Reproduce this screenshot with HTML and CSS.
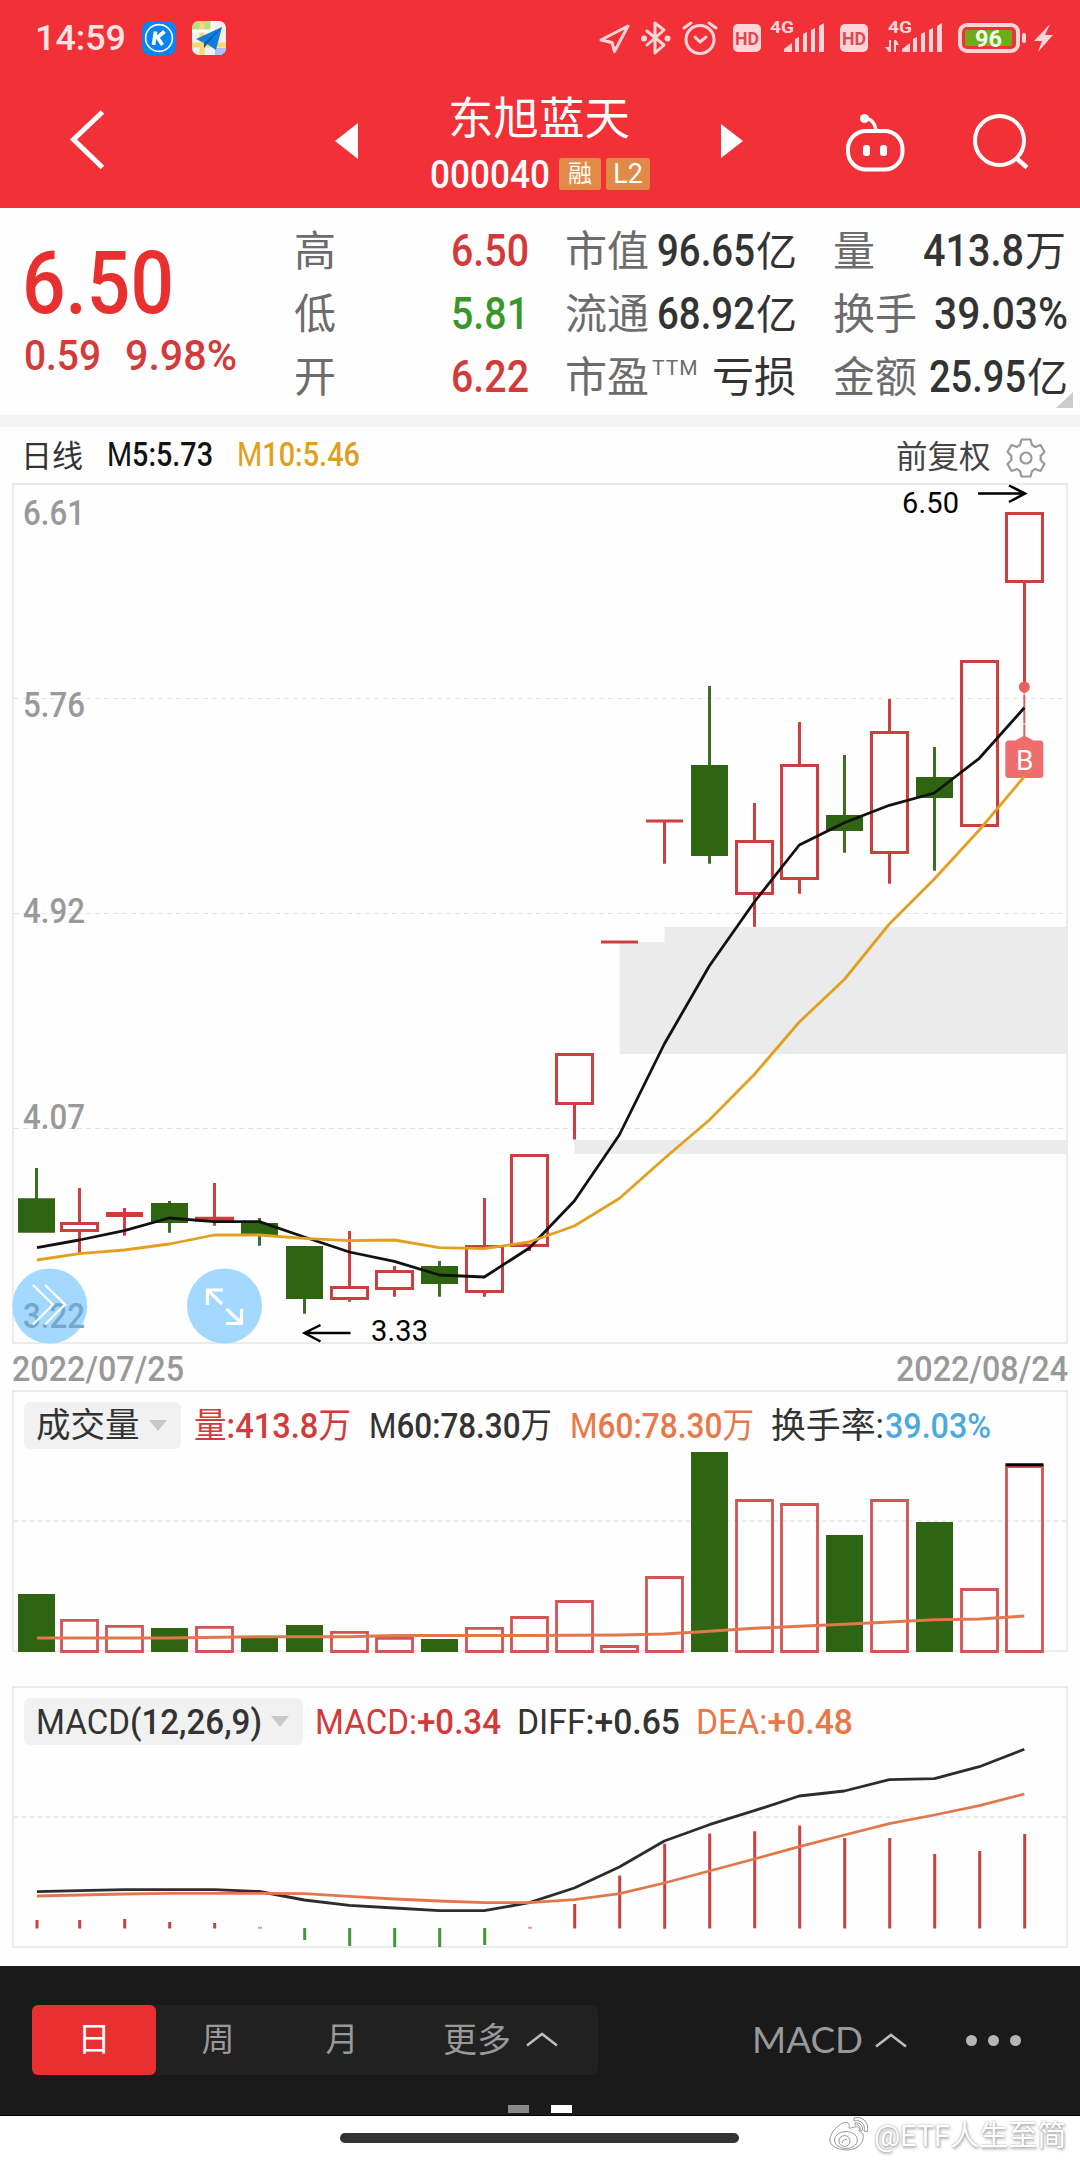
FILE: index.html
```html
<!DOCTYPE html>
<html lang="zh-CN">
<head>
<meta charset="utf-8">
<title>东旭蓝天 000040</title>
<link rel="stylesheet" href="styles.css">
</head>
<body>
<div class="screen">
  <header class="top">
    <div class="status">
      <svg class="status-time" width="87" height="40"><text x="-2" y="36" textLength="91" lengthAdjust="spacingAndGlyphs">14:59</text></svg>
      <svg class="app-k" width="34" height="34" viewBox="0 0 34 34"><rect width="34" height="34" rx="8" fill="#0a84f5"/><circle cx="17" cy="17" r="13.4" fill="none" stroke="#fff" stroke-width="1.6"/><path d="M13.5 10.5l-2 13.5M22.5 10.500l-8.500 7M15.500 16.500l5 7.500" fill="none" stroke="#fff" stroke-width="3.600"/></svg>
      <svg class="app-map" width="34" height="34" viewBox="0 0 34 34"><clipPath id="mapclip"><rect width="34" height="34" rx="7"/></clipPath><g clip-path="url(#mapclip)"><path d="M0 0h34v34H0z" fill="#f4f1ec"/><path d="M0 0h20v10H0z" fill="#b2e27f"/><path d="M23 27h11v7H23z" fill="#a9c4fb"/><path d="M0 24h34M10 0v34" stroke="#fbd775" stroke-width="5"/><path d="M20 0v10H0" fill="none" stroke="#fff" stroke-width="3"/></g><path d="M30 6L4 18l8 4v5l3-4 9 6z" fill="#0d80df"/><path d="M30 6L12 22v5l3-4z" fill="#085aa8"/></svg>
      <svg class="sys" width="460" height="40" viewBox="596 18 460 40">
        <g fill="none" stroke="#ffd5d7" stroke-width="3" stroke-linejoin="round" stroke-linecap="round">
          <path d="M628 26L601 40l11 2.500 2.500 9z"/>
          <path d="M647 31l17 14-9 8V23l9 7-17 15"/>
          <circle cx="700" cy="39.500" r="14"/>
          <path d="M695 37l5 5 6-5M684 28l7-5M716 28l-7-5"/>
          <rect x="960" y="25" width="58" height="26" rx="7" stroke-width="4"/>
        </g>
        <g fill="#ffd5d7">
          <circle cx="644" cy="38.500" r="3"/><circle cx="667.500" cy="38.500" r="3"/>
          <rect x="733" y="24" width="28" height="28" rx="5"/><rect x="840" y="24" width="28" height="28" rx="5"/>
          <path d="M784 52v-3l8-6v9zM795 39l4-2v15h-4zM803 34l4-2v20h-4zM811 30l4-2v24h-4zM819 26l5-3v29h-5z"/>
          <path d="M902 52v-3l8-6v9zM913 39l4-2v15h-4zM921 34l4-2v20h-4zM929 30l4-2v24h-4zM937 26l5-3v29h-5z"/>
          <path d="M889 40h2v12h-2l-4-5h4zM894 52V40h2l3 5h-3v7z"/>
          <rect x="1022" y="33" width="4" height="10" rx="2"/>
          <path d="M1050 24l-16 17h8l-4 11 15-17h-8z"/>
        </g>
        <rect x="965" y="30" width="47" height="16" rx="1" fill="#70a91a"/>
        <text class="hd" x="735" y="45" textLength="24" lengthAdjust="spacingAndGlyphs">HD</text>
        <text class="hd" x="842" y="45" textLength="24" lengthAdjust="spacingAndGlyphs">HD</text>
        <text class="net" x="770" y="33" textLength="24" lengthAdjust="spacingAndGlyphs">4G</text>
        <text class="net" x="888" y="33" textLength="24" lengthAdjust="spacingAndGlyphs">4G</text>
        <text class="batt" x="975" y="46.500" textLength="27" lengthAdjust="spacingAndGlyphs">96</text>
      </svg>
    </div>
    <nav class="titlebar">
      <svg class="back" width="36" height="64" viewBox="70 107 36 64"><path d="M102.500 112L73.500 139.500l29 28" fill="none" stroke="#fff" stroke-width="5"/></svg>
      <svg class="prev" width="23" height="36" viewBox="0 0 23 36"><path d="M0 18L23 0v36z" fill="#fff"/></svg>
      <div class="stock">
        <h1>东旭蓝天</h1>
        <div class="code">
          <svg width="116" height="32"><text x="-2" y="30" textLength="120" lengthAdjust="spacingAndGlyphs">000040</text></svg>
          <span class="badge">融</span><span class="badge l2">L2</span>
        </div>
      </div>
      <svg class="next" width="22" height="34" viewBox="0 0 22 34"><path d="M22 17L0 0v34z" fill="#fff"/></svg>
      <svg class="robot" width="60" height="60" viewBox="845 113 60 60"><rect x="848" y="131" width="54.500" height="38.500" rx="18" fill="none" stroke="#fff" stroke-width="4"/><path d="M865 118c7 1 10 5 11 12" fill="none" stroke="#fff" stroke-width="3.500"/><circle cx="864.500" cy="118.500" r="4.500" fill="#fff"/><rect x="863" y="145" width="7" height="11" rx="3" fill="#fff"/><rect x="880" y="145" width="7" height="11" rx="3" fill="#fff"/></svg>
      <svg class="search" width="58" height="58" viewBox="972 112 58 58"><circle cx="999.500" cy="140.500" r="24.500" fill="none" stroke="#fff" stroke-width="4"/><path d="M1016 158l11 9.500" stroke="#fff" stroke-width="4.500"/></svg>
    </nav>
  </header>

  <section class="quote">
    <div class="price">
      <svg class="last" width="144" height="64"><text x="-5" y="63" textLength="152" lengthAdjust="spacingAndGlyphs">6.50</text></svg>
      <div class="delta">
        <svg width="74" height="34"><text x="-3" y="32" textLength="77" lengthAdjust="spacingAndGlyphs">0.59</text></svg>
        <svg width="110" height="34"><text x="-3" y="32" textLength="112" lengthAdjust="spacingAndGlyphs">9.98%</text></svg>
      </div>
    </div>
    <dl class="stats">
      <div><dt>高</dt><dd class="up"><svg width="75" height="40"><text x="-2" y="36" textLength="78" lengthAdjust="spacingAndGlyphs">6.50</text></svg></dd></div>
      <div><dt>低</dt><dd class="down"><svg width="75" height="40"><text x="-2" y="36" textLength="78" lengthAdjust="spacingAndGlyphs">5.81</text></svg></dd></div>
      <div><dt>开</dt><dd class="up"><svg width="75" height="40"><text x="-2" y="36" textLength="78" lengthAdjust="spacingAndGlyphs">6.22</text></svg></dd></div>
    </dl>
    <dl class="stats">
      <div><dt>市值</dt><dd><svg width="138" height="40"><text x="-1" y="36" textLength="98" lengthAdjust="spacingAndGlyphs">96.65</text><text class="cn" x="98" y="36">亿</text></svg></dd></div>
      <div><dt>流通</dt><dd><svg width="138" height="40"><text x="-1" y="36" textLength="98" lengthAdjust="spacingAndGlyphs">68.92</text><text class="cn" x="98" y="36">亿</text></svg></dd></div>
      <div><dt>市盈<sup>TTM</sup></dt><dd class="word">亏损</dd></div>
    </dl>
    <dl class="stats">
      <div><dt>量</dt><dd><svg width="143" height="40"><text x="-1" y="36" textLength="101" lengthAdjust="spacingAndGlyphs">413.8</text><text class="cn" x="101" y="36">万</text></svg></dd></div>
      <div><dt>换手</dt><dd><svg width="132" height="40"><text x="-1" y="36" textLength="134" lengthAdjust="spacingAndGlyphs">39.03%</text></svg></dd></div>
      <div><dt>金额</dt><dd><svg width="137" height="40"><text x="-1" y="36" textLength="97" lengthAdjust="spacingAndGlyphs">25.95</text><text class="cn" x="97" y="36">亿</text></svg></dd></div>
    </dl>
    <i class="corner"></i>
  </section>

  <section class="legend">
    <span class="period">日线</span>
    <svg class="ma5" width="104" height="30"><text x="-2" y="27" textLength="106" lengthAdjust="spacingAndGlyphs"><tspan class="thin">M</tspan>5:5.73</text></svg>
    <svg class="ma10" width="122" height="30"><text x="-2" y="27" textLength="123" lengthAdjust="spacingAndGlyphs"><tspan class="thin">M</tspan>10:5.46</text></svg>
    <span class="adjust">前复权</span>
    <svg class="gear" width="40" height="40" viewBox="-20 -20 40 40"><path d="M-4.500 -18.500H4.500L6 -13Q8 -12 9 -11L14.500 -13L18.500 -6L14.500 -2Q15 0 14.500 2L18.500 6L14.500 13L9 11Q8 12 6 13L4.500 18.500H-4.500L-6 13Q-8 12 -9 11L-14.500 13L-18.500 6L-14.500 2Q-15 0 -14.500 -2L-18.500 -6L-14.500 -13L-9 -11Q-8 -12 -6 -13Z" fill="none" stroke="#999" stroke-width="2.200" stroke-linejoin="round"/><circle r="5.500" fill="none" stroke="#999" stroke-width="2.200"/></svg>
  </section>

  <svg class="kline" width="1080" height="868" viewBox="0 480 1080 868">
    <path d="M664.500 927H1068V1054H619.500V942h45zM574.500 1140H1068v14H574.500z" fill="#ebebeb"/>
    <path class="dash" d="M14 698.500H1066M14 913.500H1066M14 1128.500H1066"/>
    <rect class="frame" x="13" y="484" width="1054" height="859"/>
    <g class="axis">
      <text x="23" y="525" textLength="62" lengthAdjust="spacingAndGlyphs">6.61</text>
      <text x="23" y="716.500" textLength="62" lengthAdjust="spacingAndGlyphs">5.76</text>
      <text x="23" y="922.500" textLength="62" lengthAdjust="spacingAndGlyphs">4.92</text>
      <text x="23" y="1129" textLength="62" lengthAdjust="spacingAndGlyphs">4.07</text>
    </g>
    <path class="down-wick" d="M36.500 1168v40M169.500 1201v31.700M259.500 1218v27.700M304.500 1290v23.700M439.500 1261v35.700M709.500 686v177.700M844.500 755v97.700M934.500 747v123.700"/>
    <path class="down-body" d="M18 1198.300h37v34.500H18zM151 1203h37v20h-37zM241 1223h37v12h-37zM286 1246h37v53h-37zM421 1266h37v18h-37zM691 765h37v91h-37zM826 815h37v16h-37zM916 777h37v21h-37z"/>
    <path class="up-line" d="M79.500 1188v34M79.500 1232v20.700M124.500 1208v27.700M214.500 1183v42.700M349.500 1231v55M349.500 1300v1.700M394.500 1266v4M394.500 1290v6.700M484.500 1198v47M484.500 1293v3.700M529.500 1246v5M574.500 1104v35.500M664.500 821v42.700M754.500 803v37M754.500 895v31.700M799.500 722v42M799.500 879.700v14M889.500 699v32M889.500 853.700v30M1024.500 582v105
      M61.500 1223.500h36v7h-36zM106 1214.500h37M195 1219.300h39M331.500 1287.500h36v11h-36zM376.500 1271.500h36v17h-36zM466.500 1246.500h36v45h-36zM511.500 1155.500h36v90h-36zM556.500 1054.500h36v49h-36zM601 942h37M646 821h37M736.500 841.500h36v52h-36zM781.500 765.500h36v113h-36zM871.500 732.500h36v120h-36zM961.500 661.500h36v164h-36zM1006.500 513.500h36v68h-36z"/>
    <path d="M106 1214.500h37M195 1219.300h39" stroke="#d33a3a" stroke-width="5"/>
    <path d="M1024.300 687v50" stroke="#d66060" stroke-width="2"/><path d="M1020 694h8M1020 724h8" stroke="#fff"/>
    <circle cx="1024.300" cy="687" r="5.500" fill="#e96060"/>
    <path d="M1024.300 735.500l9 5h6.500a3.500 3.500 0 0 1 3.500 3.500v30.500a3.500 3.500 0 0 1-3.500 3.500h-31a3.500 3.500 0 0 1-3.500-3.500v-30.500a3.500 3.500 0 0 1 3.500-3.500h6.500z" fill="#ee6e6e"/>
    <text class="pin" x="1024.800" y="770" text-anchor="middle">B</text>
    <path class="line" stroke="#111" d="M37 1247.700L79.300 1240 124.300 1230.700 169.300 1218 214.300 1221.700 259.300 1221.700 304.300 1237 349.300 1252 394.300 1261.300 439.300 1275 484.300 1277 529.300 1248 574.300 1201 619.300 1135 664.300 1044 709.300 966 754.300 902 799.300 845 844.300 822.700 889.300 805.300 934.300 793 979.300 758.300 1024.300 707.700"/>
    <path class="line" stroke="#e2a01e" d="M37 1260L79.300 1253.700 124.300 1250 169.300 1244 214.300 1235 259.300 1235 304.300 1238.300 349.300 1240.700 394.300 1240 439.300 1247.700 484.300 1248.700 529.300 1242 574.300 1226 619.300 1198.500 664.300 1158.500 709.300 1120 754.300 1074.500 799.300 1022 844.300 979.500 889.300 924 934.300 879 979.300 830 1024.300 776.700"/>
    <g fill="none" stroke="#000" stroke-width="2.500"><path d="M350.500 1333H305M320.500 1325l-16 8 16 8.500M978 493.500h47M1009 485.500l16 8-16 8.500"/></g>
    <g class="mark"><text x="371" y="1341" textLength="57">3.33</text><text x="902" y="513" textLength="57">6.50</text></g>
    <g fill="#a3d9ff"><circle cx="49.700" cy="1306" r="37.500"/><circle cx="224.500" cy="1306" r="37.500"/></g>
    <text class="axis under" x="23" y="1328" textLength="62" lengthAdjust="spacingAndGlyphs">3.22</text>
    <g fill="none" stroke="#fff"><path stroke-width="2.200" d="M33 1285l20 19.500-20 20M45 1285l20 19.500-20 20"/><path stroke-width="3.200" d="M207.500 1305v-15H223M208 1290.500l14 13.500M226.500 1309l15.500 14.500M226 1323.500h15.500V1309"/></g>
  </svg>

  <div class="dates">
    <svg width="171" height="30"><text x="-1" y="26" textLength="172" lengthAdjust="spacingAndGlyphs">2022/07/25</text></svg>
    <svg width="171" height="30"><text x="0" y="26" textLength="172" lengthAdjust="spacingAndGlyphs">2022/08/24</text></svg>
  </div>

  <section class="panel volume">
    <svg class="plot" width="1080" height="264" viewBox="0 1390 1080 264">
      <path class="dash thick" d="M14 1521H1066"/>
      <rect class="frame" x="13" y="1391" width="1054" height="260"/>
      <path class="down-body" d="M18 1594h37v58H18zM151 1628h37v24h-37zM241 1638h37v14h-37zM286 1625h37v27h-37zM421 1639h37v13h-37zM691 1452h37v200h-37zM826 1535h37v117h-37zM916 1522h37v130h-37z"/>
      <path class="up-vol" d="M61.500 1620.300h36v31.200h-36zM106.500 1626.300h36v25.200h-36zM196.500 1627.300h36v24.200h-36zM331.500 1632.300h36v19.200h-36zM376.500 1638.300h36v13.200h-36zM466.500 1628.300h36v23.200h-36zM511.500 1617.500h36v34h-36zM556.500 1601.500h36v50h-36zM601.500 1646.500h36v5h-36zM646.500 1577.500h36v74h-36zM736.500 1500.500h36v151h-36zM781.500 1504.500h36v147h-36zM871.500 1500.500h36v151h-36zM961.500 1589.500h36v62h-36zM1006.500 1466.500h36v185h-36z"/>
      <path d="M1005.500 1464.700h38" stroke="#000" stroke-width="3"/>
      <path class="line vol-line" d="M37 1638L169.300 1638 259.300 1636.700 349.300 1636.700 394.300 1635.500 529.300 1635.500 619.300 1635 664.300 1634 709.300 1631.300 754.300 1628.300 799.300 1626.300 844.300 1624.300 889.300 1622 934.300 1619.700 979.300 1619 1024.300 1616"/>
    </svg>
    <div class="bar">
      <span class="chip"><span>成交量</span><i></i></span>
      <svg class="up v1" width="157" height="40"><text x="-1" y="32" textLength="157" lengthAdjust="spacingAndGlyphs"><tspan class="thin">量</tspan>:413.8<tspan class="thin">万</tspan></text></svg>
      <svg class="v2" width="180" height="40"><text x="-2" y="32" textLength="183" lengthAdjust="spacingAndGlyphs"><tspan class="thin">M</tspan>60:78.30<tspan class="thin">万</tspan></text></svg>
      <svg class="orange v3" width="182" height="40"><text x="-2" y="32" textLength="184" lengthAdjust="spacingAndGlyphs"><tspan class="thin">M</tspan>60:78.30<tspan class="thin">万</tspan></text></svg>
      <svg class="v4" width="220" height="40"><text class="thin" x="-1" y="32" textLength="113" lengthAdjust="spacingAndGlyphs">换手率:</text><text class="blue" x="113" y="32" textLength="106" lengthAdjust="spacingAndGlyphs">39.03%</text></svg>
    </div>
  </section>

  <section class="panel macd">
    <svg class="plot" width="1080" height="264" viewBox="0 1686 1080 264">
      <path class="dash thick" d="M14 1817H1066"/>
      <rect class="frame" x="13" y="1687" width="1054" height="260"/>
      <path stroke="#c94040" stroke-width="3" d="M37 1920v8.500M79.700 1920v8.500M124.700 1919v9.500M169.700 1922v6.500M214.700 1923v5.500M574.700 1904v24.500M619.700 1875.500v53M664.700 1843.700v85M709.700 1833.500v95M754.700 1831.300v97M799.700 1825.500v103M844.700 1838v90.500M889.700 1838v90.500M934.700 1854v74.500M979.700 1851v77.500M1024.700 1834v94.500"/>
      <path stroke="#df9a9a" stroke-width="2" d="M258 1927.700h4M528 1927.700h4"/>
      <path stroke="#41963a" stroke-width="3" d="M304.700 1928v12M349.700 1928v18M394.700 1928v19M439.700 1928v19M484.700 1928v17"/>
      <path class="line" stroke="#2c2c2c" d="M37 1891.700L79.300 1890.700 124.300 1889.700 214.300 1889.700 259.300 1891.500 304.300 1900 349.300 1905.300 394.300 1908 439.300 1910.700 484.300 1910.700 529.300 1902.700 574.300 1888 619.300 1867 664.300 1841 709.300 1824.700 754.300 1810.700 799.300 1796 844.300 1791 889.300 1779.700 934.300 1778.700 979.300 1766.700 1024.300 1749.300"/>
      <path class="line" stroke="#e3774c" d="M37 1896L124.300 1894 169.300 1893.300 259.300 1893.300 304.300 1893.700 349.300 1896.300 394.300 1899 439.300 1901 484.300 1902.700 529.300 1902.700 574.300 1899.700 619.300 1893.700 664.300 1883 709.300 1871 754.300 1859 799.300 1846.700 844.300 1835 889.300 1823.700 934.300 1815 979.300 1805.700 1024.300 1794"/>
    </svg>
    <div class="bar">
      <span class="chip"><svg width="223" height="40"><text x="-2" y="32" textLength="226" lengthAdjust="spacingAndGlyphs"><tspan class="thin">MACD</tspan>(12,26,9)</text></svg><i></i></span>
      <svg class="up m1" width="183" height="40"><text x="-2" y="32" textLength="186" lengthAdjust="spacingAndGlyphs"><tspan class="thin">MACD:</tspan>+0.34</text></svg>
      <svg class="m2" width="160" height="40"><text x="-2" y="32" textLength="163" lengthAdjust="spacingAndGlyphs"><tspan class="thin">DIFF</tspan>:+0.65</text></svg>
      <svg class="orange m3" width="154" height="40"><text x="-2" y="32" textLength="157" lengthAdjust="spacingAndGlyphs"><tspan class="thin">DEA:</tspan>+0.48</text></svg>
    </div>
  </section>

  <footer class="tools">
    <div class="tabs">
      <span class="tab on">日</span><span class="tab">周</span><span class="tab">月</span>
      <span class="more">更多<svg width="32" height="15" viewBox="0 0 32 15"><path d="M1 13.500L16 2l15 11.500" fill="none" stroke="#bbb" stroke-width="2.600"/></svg></span>
    </div>
    <div class="indicator"><svg width="107" height="34"><text x="-2" y="30" textLength="111" lengthAdjust="spacingAndGlyphs">MACD</text></svg><svg class="chev" width="32" height="15" viewBox="0 0 32 15"><path d="M1 13.500L16 2l15 11.500" fill="none" stroke="#bbb" stroke-width="2.600"/></svg></div>
    <div class="dots"><i></i><i></i><i></i></div>
    <div class="pages"><i></i><i class="on"></i></div>
  </footer>
  <div class="home">
    <i class="handle"></i>
    <div class="mark-by">
      <svg width="40" height="34" viewBox="0 0 40 34" fill="#fff" stroke="#999" stroke-width="1"><path d="M34 17c-1-2-4-2-4-3 1-3 0-5-4-4-3 0-5 2-6 1 1-4-1-7-6-5C7 9 0 18 1 24c1 6 9 9 17 9 10 0 18-7 16-16z"/><ellipse cx="17" cy="23" rx="11.500" ry="8.500"/><circle cx="15.500" cy="24" r="5.500"/><path d="M13 26q0-3 5-4" fill="none"/><path d="M25 4c7-2 12 4 10 10l3 1C41 7 34-2 25 1zM26 8c4-1 6 2 5 5l2 1c2-5-2-9-7-8z"/></svg>
      <span>@ETF人生至简</span>
    </div>
  </div>
</div>
</body>
</html>
```
FILE: styles.css
```css
* { box-sizing: border-box; }
body { margin: 0; background: #fefefe; font-family: Roboto, "Noto Sans CJK SC", sans-serif; color: #333; }
svg { display: block; overflow: visible; flex: none; }
svg text { font-family: Roboto, "Noto Sans CJK SC", sans-serif; font-weight: 500; fill: currentColor; }
svg .thin { font-weight: 400; }
h1, dl, dd { margin: 0; }
.screen { width: 1080px; height: 2160px; overflow: hidden; display: flex; flex-direction: column; }
.screen > * { flex: none; }

.top { height: 208px; background: #f23037; color: #fff; }
.status { height: 75px; display: flex; align-items: center; padding-left: 37px; }
.status-time { font-size: 35px; margin-top: -8px; color: #ffe3e4; }
.app-k { margin-left: 18px; }
.app-map { margin-left: 16px; }
.sys { margin-left: 370px; }
.sys .hd { font-size: 19px; font-weight: 700; fill: #e04850; }
.sys .net { font-size: 17px; font-weight: 700; fill: #ffd5d7; }
.sys .batt { font-size: 24px; font-weight: 700; fill: #f3ffe8; }

.titlebar { height: 133px; display: flex; align-items: center; padding-left: 70px; }
.back { margin-top: -5px; }
.prev { margin-left: 229px; margin-top: -1px; }
.stock { width: 219px; margin-left: 73px; margin-top: -11px; }
.stock h1 { font: 400 45.500px/64px "Noto Sans CJK SC", sans-serif; text-align: center; margin-left: -3px; }
.code { display: flex; align-items: center; margin-top: 11px; font-size: 39px; }
.code svg { margin-left: 1px; }
.badge { width: 42px; height: 32px; margin-left: 11px; border-radius: 3px; background: #e18a47; font: 24px/32px Roboto, "Noto Sans CJK SC", sans-serif; text-align: center; }
.badge.l2 { width: 44px; margin-left: 5px; font-size: 27px; }
.next { margin-left: 71px; margin-top: -1px; }
.robot { margin-left: 102px; margin-top: 3px; }
.search { margin-left: 67px; margin-top: -1px; }

.quote { height: 219px; position: relative; border-bottom: 12px solid #f4f4f4; display: grid; grid-template-columns: 268px 233px 230px 233px; column-gap: 0; padding-left: 27px; }
.stats:nth-of-type(2) { margin-left: 38px; margin-right: -38px; }
.stats:nth-of-type(3) { margin-left: 76px; margin-right: -76px; }
.price { padding-top: 42px; color: #e83030; }
.last { font-size: 88px; }
.delta { display: flex; gap: 27px; margin-top: 24px; font-size: 43px; color: #d33a3a; }
.stats { padding-top: 10px; font-size: 42px; }
.stats > div { height: 63px; display: flex; align-items: center; justify-content: space-between; line-height: 63px; white-space: nowrap; }
.stats svg { font-size: 44px; }
.stats dt { color: #6c6c6c; font-family: "Noto Sans CJK SC", sans-serif; font-weight: 400; height: 63px; margin: -4px 0 0 -1px; }
.stats dd { color: #333; height: 63px; display: flex; align-items: center; font-weight: 400; }
.stats dd.word { padding-top: 3px; }
.stats sup { font: 400 21px/20px Roboto, sans-serif; letter-spacing: 1px; vertical-align: 17px; margin-left: 3px; }
.stats .cn { font-size: 41px; font-weight: 400; }
.stats dd.up, .up { color: #d33a3a; }
.stats dd.down { color: #39972a; }
.corner { position: absolute; right: 7px; bottom: 7px; border: solid transparent; border-width: 0 0 16px 17px; border-bottom-color: #ccc; }

.legend { height: 53px; display: flex; align-items: center; padding-left: 21px; padding-top: 1px; font-size: 33px; }
.period { font-size: 31px; width: 88px; color: #333; margin-top: -2px; }
.ma5 { color: #111; }
.ma10 { margin-left: 26px; color: #dfa020; }
.adjust { margin-left: 535px; margin-top: -1px; font-size: 31.500px; color: #444; white-space: nowrap; width: 95px; }
.gear { margin-left: 15px; margin-top: 7px; }

.frame { fill: none; stroke: #ebebeb; stroke-width: 2; }
.dash { fill: none; stroke: #e2e2e2; stroke-width: 1.2; stroke-dasharray: 5 4; }
.dash.thick { stroke: #ebebeb; stroke-width: 2; stroke-dasharray: 4 4; }
svg .axis text, svg text.axis { font-size: 34.500px; fill: #999; }
svg text.under { fill: #74a8ca; }
.down-wick { stroke: #3b6f22; stroke-width: 3; }
.down-body { fill: #2f6512; }
.up-line { fill: none; stroke: #cd3e3e; stroke-width: 3; }
.up-vol { fill: none; stroke: #d25454; stroke-width: 2.8; }
.line { fill: none; stroke-width: 2.800; stroke-linejoin: round; }
.vol-line { stroke: #e3774c; stroke-width: 3; }
svg .pin { font-size: 28px; font-weight: 400; fill: #fff; }
.mark text { font-size: 29px; font-weight: 400; fill: #000; }

.dates { height: 42px; display: flex; justify-content: space-between; padding: 7px 13px 0; font-size: 35px; color: #999; }
.panel { display: grid; height: 264px; font-size: 35px; }
.panel > * { grid-area: 1 / 1; }
.volume { margin-bottom: 32px; }
.macd { height: 280px; }
.bar { display: flex; align-items: flex-start; padding: 12px 0 0 24px; }
.bar > svg { margin-top: 4px; }
.chip { display: flex; align-items: center; width: 157px; height: 47px; padding-left: 12px; border-radius: 6px; background: #f1f1f1; font-size: 34.500px; line-height: 47px; white-space: nowrap; }
.chip svg { font-size: 34.500px; margin-top: 1px; }
.chip i { margin-left: 9px; border: solid transparent; border-width: 11px 9px 0; border-top-color: #c8c8c8; }
.macd .chip { width: 279px; padding-left: 14px; }
.macd .chip i { margin-left: 10px; }
.v1 { margin-left: 14px; }
.v2 { margin-left: 19px; }
.v3 { margin-left: 21px; }
.v4 { margin-left: 18px; }
.m1 { margin-left: 14px; }
.m2 { margin-left: 19px; }
.m3 { margin-left: 19px; }
.orange { color: #e8784a; }
.blue { color: #4aa9df; fill: #4aa9df; }

.tools { position: relative; height: 150px; background: #1a1a1a; border-bottom: 1px solid #000; display: flex; align-items: center; padding: 0 0 2px 32px; color: #999; font-size: 33px; }
.tabs { display: flex; width: 566px; height: 70px; line-height: 70px; border-radius: 6px; background: #212121; }
.tab { width: 124px; text-align: center; }
.tab.on { background: #e83030; color: #fff; border-radius: 6px; }
.more { display: flex; align-items: center; margin-left: 39px; gap: 15px; font-size: 34px; }
.indicator { display: flex; align-items: center; margin-left: 156px; padding-top: 1px; }
.indicator text { font-family: Lato, sans-serif; font-weight: 400; font-size: 36px; }
.chev { margin-left: 14px; }
.dots { display: flex; gap: 11px; margin: 1px 0 0 59px; }
.dots i { width: 11px; height: 11px; border-radius: 50%; background: #b5b5b5; }
.pages { position: absolute; left: 508px; bottom: 2px; display: flex; gap: 22px; }
.pages i { width: 21px; height: 8px; background: #888; }
.pages .on { background: #fff; }
.home { height: 44px; background: #fff; display: flex; align-items: flex-start; }
.handle { width: 399px; height: 10px; margin: 17px 0 0 340px; border-radius: 5px; background: #333; }
.mark-by { display: flex; align-items: center; margin-left: 90px; height: 36px; gap: 5px; font-size: 29px; color: #fff; white-space: nowrap; text-shadow: 0 0 2px #999, 1px 2px 3px #aaa; }
.mark-by span { margin-top: -3px; }
```
